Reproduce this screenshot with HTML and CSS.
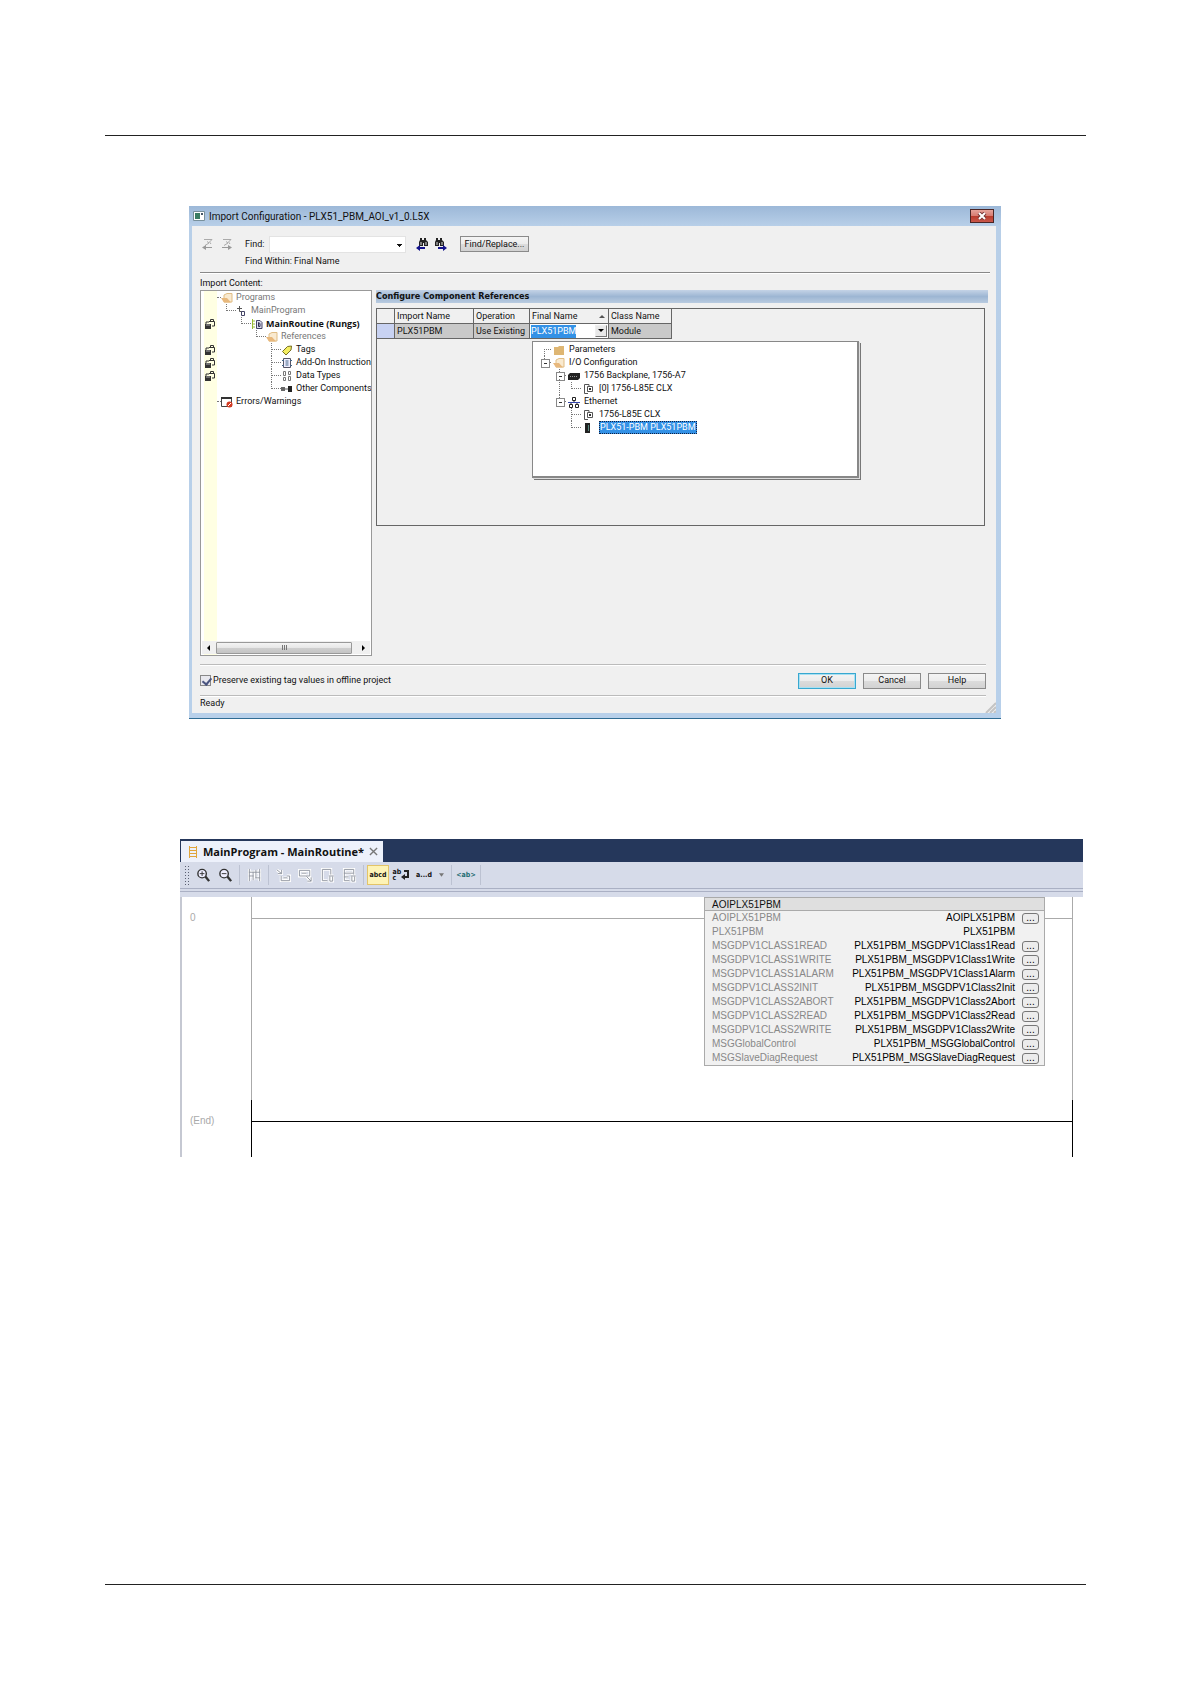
FILE: index.html
```html
<!DOCTYPE html>
<html lang="en">
<head>
    <meta charset="utf-8">
    <meta name="viewport" content="width=device-width, initial-scale=1">
    <title>Import Configuration</title>
    <link rel="stylesheet" href="styles.css">
</head>
<body>
    <svg class="sprite" aria-hidden="true">
        <symbol id="lock" viewBox="0 0 12 12">
            <path d="M1 6h6v5H1z" fill="#333"/>
            <path d="M2 6V4h3M5 3.500h5.500V8H8M6.500 3.500V1.500h3v2" fill="none" stroke="#333"/>
            <path d="M2 7h4" stroke="#aaa"/>
        </symbol>
        <symbol id="folder" viewBox="0 0 12 12">
            <path d="M1 3h4l1-1h5v9H1z" fill="#deb673"/>
        </symbol>
        <symbol id="folder-open" viewBox="0 0 12 12">
            <path d="M3 3l3-1.500h5v8.500H3z" fill="#f9ead0" stroke="#e0bd85"/>
            <path d="M0 6h6l4 4.500H3z" fill="#e8b87c"/>
        </symbol>
        <symbol id="program" viewBox="0 0 12 12">
            <path d="M3.500 1v5.500H6M1 3.500h5" fill="none" stroke="#555"/>
            <path d="M5.500 6.500h3v4h-3z" fill="#fff" stroke="#446"/>
        </symbol>
        <symbol id="routine" viewBox="0 0 12 12">
            <path d="M1.500 1v10M1 3h3M1 6h3M1 9h3" stroke="#9b3" fill="none"/>
            <path d="M5.500 2.500H9l2 2v6H5.500z" fill="#dde" stroke="#446"/>
            <path d="M7.500 4.500v4H9v-3z" fill="none" stroke="#335"/>
        </symbol>
        <symbol id="tag" viewBox="0 0 12 12">
            <path d="M1.500 7.500l5-5 4-.500-.500 4-5 5z" fill="#f4ee62" stroke="#776f22"/>
        </symbol>
        <symbol id="addon" viewBox="0 0 12 12">
            <path d="M2.500 1.500h7v9h-7z" fill="#eef" stroke="#556"/>
            <path d="M1 3.500h2M1 8.500h2M9 3.500h2M9 8.500h2M4.500 4h3M4.500 6h3M4.500 8h3" stroke="#468"/>
        </symbol>
        <symbol id="types" viewBox="0 0 12 12">
            <path d="M2.500 1.500h2v4h-2zM7.500 1.500h2v3h-2zM2.500 7.500h2v3h-2zM7.500 6.500h2v4h-2z" fill="#fff" stroke="#777"/>
        </symbol>
        <symbol id="other" viewBox="0 0 12 12">
            <path d="M0 4h4v4H0z" fill="#666"/>
            <path d="M4 6h4" stroke="#555"/>
            <path d="M7 3h4v6H7z" fill="#222"/>
        </symbol>
        <symbol id="errors" viewBox="0 0 12 12">
            <path d="M.500 1.500h10v9H.500z" fill="#fff" stroke="#444"/>
            <path d="M0 2h11" stroke="#333" stroke-width="2"/>
            <circle cx="8.500" cy="8.500" r="3" fill="#d23a22"/>
            <path d="M7 10l3-3" stroke="#fff"/>
        </symbol>
        <symbol id="chassis" viewBox="0 0 12 12">
            <path d="M0 5l2-2h10v5l-2 2H0z" fill="#222"/>
            <path d="M2 6.500h7" stroke="#999" stroke-dasharray="1 1"/>
        </symbol>
        <symbol id="cpu" viewBox="0 0 12 12">
            <path d="M5 10.500H1.500v-9H6V3" fill="none" stroke="#555"/>
            <path d="M4.500 3.500h5v5h-5z" fill="#fff" stroke="#555"/>
            <path d="M6 5h2v2H6z" fill="#333"/>
        </symbol>
        <symbol id="network" viewBox="0 0 12 12">
            <path d="M0 6.500h12" stroke="#3344aa"/>
            <path d="M6 4v2M3 7v2M9 7v2" stroke="#222"/>
            <path d="M4.500 1.500h3v3h-3zM1.500 8.500h3v3h-3zM7.500 8.500h3v3h-3z" fill="#fff" stroke="#222"/>
        </symbol>
        <symbol id="module" viewBox="0 0 12 12">
            <path d="M2 1h5v10H2z" fill="#222"/>
            <path d="M5.500 3v6" stroke="#5a8a80"/>
        </symbol>
        <symbol id="find-prev" viewBox="0 0 14 14">
            <path d="M4 1h2v2h2V1h2v2l2 2v4H8V6H7v3H3V5l1-2z" fill="#222"/>
            <path d="M5 5v3M10 5v3" stroke="#ddd"/>
            <path d="M0 11l4-3v2h5v2H4v2z" fill="#12128a"/>
        </symbol>
        <symbol id="find-next" viewBox="0 0 14 14">
            <path d="M3 1h2v2h2V1h2v2l2 2v4H7V6H6v3H2V5l1-2z" fill="#222"/>
            <path d="M4 5v3M9 5v3" stroke="#ddd"/>
            <path d="M14 11l-4-3v2H5v2h5v2z" fill="#12128a"/>
        </symbol>
        <symbol id="mark-prev" viewBox="0 0 12 12">
            <path d="M2 1.500h8L7.500 4 9 6M5 3.500L7 5 3 7.500" fill="none" stroke="#aaa"/>
            <path d="M0 9.500L4 7v2h6v1H4v2z" fill="#999"/>
        </symbol>
        <symbol id="mark-next" viewBox="0 0 12 12">
            <path d="M2 1.500h8L7.500 4 9 6M5 3.500L7 5 3 7.500" fill="none" stroke="#aaa"/>
            <path d="M11 9.500L7 7v2H1v1h6v2z" fill="#999"/>
        </symbol>
    </svg>

    <header class="page-header"></header>

    <section class="dialog">
        <div class="title-bar">
            <svg class="app-icon" viewBox="0 0 12 12"><path d="M.500 1.500h11v9H.500z" fill="#fff" stroke="#78909c"/><path d="M2 3h5v6H2z" fill="#3b7d62"/><path d="M8 3h2v2H8z" fill="#456"/></svg>
            <h1>Import Configuration - PLX51_PBM_AOI_v1_0.L5X</h1>
            <button class="close" aria-label="Close"><svg viewBox="0 0 10 8"><path d="M2 1l6 6M8 1L2 7" stroke="#733" stroke-width="4"/><path d="M2 1l6 6M8 1L2 7" stroke="#fff" stroke-width="2"/></svg></button>
        </div>
        <div class="dialog-body">
            <div class="find-bar">
                <svg class="icon"><use href="#mark-prev"/></svg>
                <svg class="icon next"><use href="#mark-next"/></svg>
                <label for="find">Find:</label>
                <select id="find"><option></option></select>
                <svg class="icon-big"><use href="#find-prev"/></svg>
                <svg class="icon-big"><use href="#find-next"/></svg>
                <button class="find-replace">Find/Replace...</button>
            </div>
            <p class="find-within">Find Within: Final Name</p>
            <hr class="dark">
            <div class="panes">
                <div class="content-pane">
                    <h2 class="content-title">Import Content:</h2>
                    <div class="content-tree">
                        <ul class="tree">
                            <li class="l0"><span class="lock"></span><i class="twig"></i><svg class="icon"><use href="#folder-open"/></svg><span class="dim">Programs</span></li>
                            <li class="l1"><span class="lock"></span><i class="twig"></i><svg class="icon"><use href="#program"/></svg><span class="dim">MainProgram</span></li>
                            <li class="l2"><svg class="lock"><use href="#lock"/></svg><i class="twig"></i><svg class="icon"><use href="#routine"/></svg><b>MainRoutine (Rungs)</b></li>
                            <li class="l3"><span class="lock"></span><i class="twig"></i><svg class="icon"><use href="#folder-open"/></svg><span class="dim">References</span></li>
                            <li class="l4"><svg class="lock"><use href="#lock"/></svg><i class="twig more"></i><svg class="icon"><use href="#tag"/></svg><span>Tags</span></li>
                            <li class="l4"><svg class="lock"><use href="#lock"/></svg><i class="twig more"></i><svg class="icon"><use href="#addon"/></svg><span>Add-On Instructions</span></li>
                            <li class="l4"><svg class="lock"><use href="#lock"/></svg><i class="twig more"></i><svg class="icon"><use href="#types"/></svg><span>Data Types</span></li>
                            <li class="l4"><span class="lock"></span><i class="twig"></i><svg class="icon"><use href="#other"/></svg><span>Other Components</span></li>
                            <li class="l0"><span class="lock"></span><i class="twig"></i><svg class="icon"><use href="#errors"/></svg><span>Errors/Warnings</span></li>
                        </ul>
                        <div class="scrollbar">
                            <svg viewBox="0 0 8 8"><path d="M5 1v6L2 4z"/></svg>
                            <div class="thumb"><i></i><i></i><i></i></div>
                            <svg viewBox="0 0 8 8"><path d="M3 1v6l3-3z"/></svg>
                        </div>
                    </div>
                </div>
                <div class="reference-pane">
                    <h2 class="pane-title">Configure Component References</h2>
                    <div class="reference-box">
                        <table>
                            <thead>
                                <tr>
                                    <th class="c-mark"></th>
                                    <th class="c-import">Import Name</th>
                                    <th class="c-operation">Operation</th>
                                    <th class="c-final"><div class="sorted">Final Name <svg viewBox="0 0 6 4"><path d="M0 4l3-3 3 3z" fill="#555"/></svg></div></th>
                                    <th class="c-class">Class Name</th>
                                </tr>
                            </thead>
                            <tbody>
                                <tr>
                                    <td class="mark"></td>
                                    <td>PLX51PBM</td>
                                    <td>Use Existing</td>
                                    <td class="editing">
                                        <div class="combo"><span>PLX51PBM</span><button aria-label="Open list"><svg viewBox="0 0 6 4"><path d="M0 0h6L3 3z"/></svg></button></div>
                                        <div class="popup">
                                            <ul class="tree modules">
                                                <li class="l0"><i class="twig first"></i><svg class="icon"><use href="#folder"/></svg><span>Parameters</span></li>
                                                <li class="l0"><i class="twig box"></i><svg class="icon"><use href="#folder-open"/></svg><span>I/O Configuration</span></li>
                                                <li class="l1"><i class="twig box"></i><svg class="icon"><use href="#chassis"/></svg><span>1756 Backplane, 1756-A7</span></li>
                                                <li class="l2 pass"><i class="twig"></i><svg class="icon"><use href="#cpu"/></svg><span>[0] 1756-L85E CLX</span></li>
                                                <li class="l1"><i class="twig box"></i><svg class="icon"><use href="#network"/></svg><span>Ethernet</span></li>
                                                <li class="l2"><i class="twig more"></i><svg class="icon"><use href="#cpu"/></svg><span>1756-L85E CLX</span></li>
                                                <li class="l2"><i class="twig"></i><svg class="icon"><use href="#module"/></svg><span class="selected">PLX51-PBM PLX51PBM</span></li>
                                            </ul>
                                        </div>
                                    </td>
                                    <td>Module</td>
                                </tr>
                            </tbody>
                        </table>
                    </div>
                </div>
            </div>
            <hr>
            <div class="actions">
                <input type="checkbox" id="preserve" checked>
                <label for="preserve">Preserve existing tag values in offline project</label>
                <button class="default">OK</button>
                <button>Cancel</button>
                <button>Help</button>
            </div>
            <hr>
            <div class="status">
                <span>Ready</span>
                <svg class="grip" viewBox="0 0 12 12"><path d="M2 12L12 2M6 12l6-6M10 12l2-2" stroke="#c4c4c4" stroke-width="2"/></svg>
            </div>
        </div>
    </section>

    <section class="editor">
        <div class="tabs">
            <div class="tab">
                <svg class="ladder-icon" viewBox="0 0 10 14"><path d="M1.500 1v12M8.500 1v12M1 2.500h8M1 5.500h8M1 8.500h8M1 11.500h8" fill="none" stroke="#e0a53c"/></svg>
                <h2>MainProgram - MainRoutine*</h2>
                <button aria-label="Close tab"><svg viewBox="0 0 10 10"><path d="M1 1l8 8M9 1L1 9" stroke="#777" stroke-width="1.500"/></svg></button>
            </div>
        </div>
        <div class="toolbar">
            <i class="handle"></i>
            <button aria-label="Zoom in"><svg viewBox="0 0 16 16"><circle cx="6.500" cy="6" r="4.500" fill="#eef" stroke="#333" stroke-width="1.500"/><path d="M4 6h5M6.500 3.500v5" stroke="#333"/><path d="M10 9l4 5" stroke="#333" stroke-width="2.500"/></svg></button>
            <button aria-label="Zoom out"><svg viewBox="0 0 16 16"><circle cx="6.500" cy="6" r="4.500" fill="#eef" stroke="#333" stroke-width="1.500"/><path d="M4 6h5" stroke="#333"/><path d="M10 9l4 5" stroke="#333" stroke-width="2.500"/></svg></button>
            <i class="sep"></i>
            <button aria-label="Toggle view"><svg viewBox="0 0 16 16"><path d="M2.500 1v13M13.500 1v13M2 4.500h12M2 8.500h5M9 10.500h5M6.500 4v9M9.500 2v9" fill="none" stroke="#fff" stroke-width="3"/><path d="M2.500 1v13M13.500 1v13M2 4.500h12M2 8.500h5M9 10.500h5M6.500 4v9M9.500 2v9" fill="none" stroke="#8f949f"/></svg></button>
            <i class="sep"></i>
            <button aria-label="Start edit"><svg viewBox="0 0 16 16"><path d="M5.500 8.500v5h9v-5h-3M8 10.500h4M1 2l5 4M2 6h4V2" fill="none" stroke="#fff" stroke-width="3"/><path d="M5.500 8.500v5h9v-5h-3M8 10.500h4M1 2l5 4M2 6h4V2" fill="none" stroke="#8f949f"/></svg></button>
            <button aria-label="Accept edit"><svg viewBox="0 0 16 16"><path d="M1.500 2.500h11v6h-11zM4 5.500h5M9 9l5 5M10 14h4v-4" fill="none" stroke="#fff" stroke-width="3"/><path d="M1.500 2.500h11v6h-11zM4 5.500h5M9 9l5 5M10 14h4v-4" fill="none" stroke="#8f949f"/></svg></button>
            <button aria-label="Cancel edit"><svg viewBox="0 0 16 16"><path d="M8 13.500H2.500v-12h9V7M9.500 8.500h5M10.500 9v5h3V9" fill="none" stroke="#fff" stroke-width="3"/><path d="M8 13.500H2.500v-12h9V7M9.500 8.500h5M10.500 9v5h3V9" fill="none" stroke="#8f949f"/></svg></button>
            <button aria-label="Delete edit"><svg viewBox="0 0 16 16"><path d="M8 13.500H2.500v-12h10V7M2 5.500h10M2 9.500h5M9.500 8.500h5M10.500 9v5h3V9" fill="none" stroke="#fff" stroke-width="3"/><path d="M8 13.500H2.500v-12h10V7M2 5.500h10M2 9.500h5M9.500 8.500h5M10.500 9v5h3V9" fill="none" stroke="#8f949f"/></svg></button>
            <i class="sep"></i>
            <button class="text on">abcd</button>
            <button class="wrap" aria-label="Wrap names"><span>ab<br>c</span><svg viewBox="0 0 8 10"><path d="M3 1h4v6H2" fill="none" stroke="#222" stroke-width="2"/><path d="M0 7l4-3v6z" fill="#222"/></svg></button>
            <button class="text">a...d</button>
            <svg class="drop" viewBox="0 0 6 4"><path d="M0 0h6L3 4z" fill="#777"/></svg>
            <i class="sep"></i>
            <button class="text teal">&lt;ab&gt;</button>
            <i class="sep"></i>
        </div>
        <div class="strip"></div>
        <div class="ladder">
            <div class="rung">
                <span class="number">0</span>
                <div class="rails">
                    <i class="wire"></i>
                    <table class="block">
                        <caption>AOIPLX51PBM</caption>
                        <tbody>
                            <tr><th>AOIPLX51PBM</th><td>AOIPLX51PBM</td><td class="more"><button>...</button></td></tr>
                            <tr><th>PLX51PBM</th><td>PLX51PBM</td><td></td></tr>
                            <tr><th>MSGDPV1CLASS1READ</th><td>PLX51PBM_MSGDPV1Class1Read</td><td class="more"><button>...</button></td></tr>
                            <tr><th>MSGDPV1CLASS1WRITE</th><td>PLX51PBM_MSGDPV1Class1Write</td><td class="more"><button>...</button></td></tr>
                            <tr><th>MSGDPV1CLASS1ALARM</th><td>PLX51PBM_MSGDPV1Class1Alarm</td><td class="more"><button>...</button></td></tr>
                            <tr><th>MSGDPV1CLASS2INIT</th><td>PLX51PBM_MSGDPV1Class2Init</td><td class="more"><button>...</button></td></tr>
                            <tr><th>MSGDPV1CLASS2ABORT</th><td>PLX51PBM_MSGDPV1Class2Abort</td><td class="more"><button>...</button></td></tr>
                            <tr><th>MSGDPV1CLASS2READ</th><td>PLX51PBM_MSGDPV1Class2Read</td><td class="more"><button>...</button></td></tr>
                            <tr><th>MSGDPV1CLASS2WRITE</th><td>PLX51PBM_MSGDPV1Class2Write</td><td class="more"><button>...</button></td></tr>
                            <tr><th>MSGGlobalControl</th><td>PLX51PBM_MSGGlobalControl</td><td class="more"><button>...</button></td></tr>
                            <tr><th>MSGSlaveDiagRequest</th><td>PLX51PBM_MSGSlaveDiagRequest</td><td class="more"><button>...</button></td></tr>
                        </tbody>
                    </table>
                    <i class="wire short"></i>
                </div>
            </div>
            <div class="rung end">
                <span class="number">(End)</span>
                <div class="rails"><i class="wire"></i></div>
            </div>
        </div>
    </section>

    <footer class="page-footer"></footer>
</body>
</html>
```

FILE: styles.css
```css
* {
    box-sizing: border-box;
}
body {
    display: flex;
    flex-direction: column;
    min-height: 100vh;
    margin: 0;
    padding: 0 105px;
    background: white;
    color: #111;
    font: 9px/13px Roboto, "Liberation Sans", sans-serif;
}
h1, h2, p, ul, hr {
    margin: 0;
    padding: 0;
}
button, select, input {
    margin: 0;
    padding: 0;
    font: inherit;
    color: inherit;
}
svg {
    flex: none;
}
.sprite {
    position: absolute;
    width: 0;
    height: 0;
}
.page-header {
    height: 136px;
    border-bottom: 1px solid #222;
}
.page-footer {
    height: 100px;
    margin-top: auto;
    border-top: 1px solid #222;
}
.icon {
    width: 12px;
    height: 12px;
}
.icon-big {
    width: 14px;
    height: 14px;
}

/* import dialog */
.dialog {
    margin: 70px 85px 0 84px;
    padding: 0 5px 5px 3px;
    background: linear-gradient(#9cb8d8, #b8cfe8 20px, #b8d0ea);
    border-bottom: 1px solid #2f6c94;
}
.title-bar {
    display: flex;
    align-items: center;
    height: 20px;
}
.title-bar h1 {
    flex: 1;
    padding-top: 1px;
    font-size: 10px;
    font-weight: normal;
}
.app-icon {
    width: 12px;
    height: 12px;
    margin: 0 4px 0 1px;
}
.close {
    display: flex;
    align-items: center;
    justify-content: center;
    width: 24px;
    height: 14px;
    margin-right: 2px;
    border: 1px solid #4a2525;
    background: linear-gradient(#e6a39b, #d77a70 50%, #b93a2c 50%, #c9574a);
}
.close svg {
    width: 10px;
    height: 8px;
}
.dialog-body {
    padding: 0 10px 0 8px;
    background: #f0f0f0;
}
hr {
    border: 0;
    border-top: 1px solid #bbb;
    border-bottom: 1px solid white;
}
hr.dark {
    margin-right: -4px;
    border-top-color: #888;
}
.find-bar {
    display: flex;
    align-items: center;
    height: 28px;
    padding: 8px 0 0 2px;
}
.find-bar .next {
    margin-left: 7px;
}
.find-bar label {
    width: 24px;
    margin-left: 12px;
}
.find-bar select {
    width: 137px;
    height: 17px;
    margin-right: 10px;
    border: 1px solid #e3e3e3;
    appearance: none;
    background: linear-gradient(#111, #111) no-repeat right 3px top 7px / 5px 1px, linear-gradient(#111, #111) no-repeat right 4px top 8px / 3px 1px, linear-gradient(#111, #111) no-repeat right 5px top 9px / 1px 1px, white;
}
.find-bar .icon-big + .icon-big {
    margin-left: 3px;
}
.find-replace {
    width: 69px;
    height: 16px;
    margin-left: 13px;
}
.find-replace, .actions button {
    border: 1px solid #8a8a8a;
    background: linear-gradient(#f4f4f4, #ececec 50%, #dcdcdc 50%, #d2d2d2);
}
.find-within {
    height: 18px;
    padding: 1px 0 0 45px;
}
.panes {
    display: flex;
    gap: 4px;
    padding: 2px 0 8px;
}
.content-pane {
    width: 172px;
}
.content-title {
    height: 14px;
    font-size: 9px;
    font-weight: normal;
    line-height: 14px;
}
.content-tree {
    display: flex;
    flex-direction: column;
    height: 366px;
    border: 1px solid #999;
    overflow: hidden;
    background: linear-gradient(90deg, white 3px, #ffffe3 3px, #ffffe3 16px, white 16px);
}

/* trees */
.tree {
    flex: 1;
    padding-left: 3px;
    list-style: none;
}
.tree li {
    position: relative;
    display: flex;
    align-items: center;
    height: 13px;
    white-space: nowrap;
}
.tree .icon {
    margin-right: 3px;
}
.lock {
    flex: none;
    width: 12px;
    height: 12px;
    margin-right: 1px;
}
.dim {
    color: #777;
}
.tree b {
    font-family: "Open Sans", sans-serif;
}
.twig {
    position: relative;
    flex: none;
    align-self: stretch;
    width: 10px;
}
.twig::before {
    content: "";
    position: absolute;
    inset: 0 0 6px 0;
    border-left: 1px dotted #777;
    border-bottom: 1px dotted #777;
}
.twig.more::after {
    content: "";
    position: absolute;
    inset: 0 auto 0 0;
    border-left: 1px dotted #777;
}
.content-tree .l0 .twig {
    width: 4px;
}
.content-tree .l0 .twig::before {
    border-left: 0;
}
.content-tree .l1 .twig {
    margin-left: 9px;
}
.content-tree .l2 .twig {
    margin-left: 24px;
}
.content-tree .l3 .twig {
    margin-left: 39px;
}
.content-tree .l4 .twig {
    margin-left: 54px;
}
.scrollbar {
    display: flex;
    align-items: center;
    height: 13px;
    margin: 0 1px 1px;
    background: #f0f0f0;
}
.scrollbar svg {
    width: 8px;
    height: 8px;
    margin: 0 3px;
}
.thumb {
    display: flex;
    justify-content: center;
    align-items: center;
    gap: 1px;
    flex: 1;
    height: 12px;
    margin-right: 4px;
    border: 1px solid #999;
    border-radius: 1px;
    background: linear-gradient(#f4f4f4, #e6e6e6 50%, #cfcfcf 50%, #c4c4c4);
}
.thumb i {
    width: 1px;
    height: 5px;
    background: #777;
}

/* component references */
.reference-pane {
    display: flex;
    flex-direction: column;
    flex: 1;
    padding: 14px 0 0;
}
.pane-title {
    height: 13px;
    margin-right: -2px;
    background: linear-gradient(#c4d3e6, #9db6d3 50%, #b9cbe0);
    font: bold 9px/13px "DejaVu Sans Condensed", "DejaVu Sans", sans-serif;
}
.reference-box {
    height: 218px;
    margin: 5px 1px 0 0;
    border: 1px solid #666;
}
.reference-box table {
    border-collapse: collapse;
    table-layout: fixed;
    width: 296px;
    margin: -1px;
}
.reference-box th, .reference-box td {
    height: 15px;
    padding: 0 0 0 2px;
    border: 1px solid #666;
    background: #c9c9c9;
    font-weight: normal;
    line-height: 13px;
    text-align: left;
    white-space: nowrap;
}
.reference-box th {
    background: #f0f0f0;
}
.reference-box .c-mark {
    width: 18px;
}
.c-import {
    width: 79px;
}
.c-operation {
    width: 56px;
}
.c-final {
    width: 79px;
}
.sorted {
    display: flex;
    align-items: center;
    justify-content: space-between;
    padding-right: 3px;
}
.sorted svg {
    width: 6px;
    height: 4px;
}
.reference-box .mark {
    background: #c8d2f2;
}
.reference-box .editing {
    position: relative;
    padding: 0 1px;
    background: white;
}
.combo {
    display: flex;
    align-items: center;
    justify-content: space-between;
}
.combo span {
    background: #3391e6;
    color: white;
}
.combo button {
    display: flex;
    align-items: center;
    justify-content: center;
    width: 12px;
    height: 12px;
    border: 1px solid;
    border-color: #eee #777 #777 #eee;
    background: #e8e8e8;
}
.combo svg {
    width: 6px;
    height: 4px;
}
.popup {
    position: absolute;
    z-index: 1;
    top: 17px;
    left: 2px;
    width: 327px;
    height: 137px;
    padding: 1px 0 0 5px;
    border: 1px solid #888;
    border-width: 1px 2px 2px 1px;
    background: white;
    box-shadow: 1px 1px #ddd, 2px 2px #777;
}
.modules .icon {
    margin-right: 4px;
}
.modules .twig {
    margin-right: 2px;
}
.modules .l1 .twig {
    margin-left: 15px;
}
.modules .l2 .twig {
    margin-left: 30px;
}
.modules .first::before {
    inset: 6px 0 0 3px;
    border-top: 1px dotted #777;
    border-bottom: 0;
}
.modules .box::before {
    left: 3px;
}
.modules .box::after {
    content: "";
    position: absolute;
    inset: 3px auto auto 0;
    width: 7px;
    height: 7px;
    border: 1px solid #888;
    background: linear-gradient(#333, #333) no-repeat center / 3px 1px, white;
}
.modules .pass::before {
    content: "";
    position: absolute;
    inset: -3px auto 0 18px;
    border-left: 1px dotted #777;
}
.selected {
    padding: 0 1px;
    outline: 1px dotted #124;
    outline-offset: -1px;
    background: #3391e6;
    color: white;
}

/* dialog footer */
.actions {
    display: flex;
    align-items: center;
    gap: 7px;
    height: 29px;
}
.actions input {
    appearance: none;
    width: 11px;
    height: 11px;
    margin-right: -5px;
    border: 1px solid #888;
    background: #e8e8ee;
}
.actions input:checked::before {
    content: "";
    display: block;
    width: 4px;
    height: 7px;
    margin-left: 3px;
    border: solid #4a5580;
    border-width: 0 2px 2px 0;
    transform: rotate(40deg);
}
.actions label {
    flex: 1;
}
.actions button {
    width: 58px;
    height: 16px;
}
.actions .default {
    border-color: #38a8d0;
    box-shadow: inset 0 0 0 1px #a9e0f2;
}
.status {
    display: flex;
    justify-content: space-between;
    height: 16px;
    margin-right: -10px;
}
.grip {
    align-self: flex-end;
    width: 12px;
    height: 12px;
}

/* ladder editor */
.editor {
    margin: 120px 3px 0 75px;
    font: 10px/14px "Liberation Sans", sans-serif;
}
.tabs {
    height: 23px;
    padding: 2px 0 0 1px;
    background: #25375b;
}
.tab {
    display: flex;
    align-items: center;
    width: 202px;
    height: 21px;
    padding: 0 5px 0 7px;
    background: #edf1fb;
}
.tab h2 {
    flex: 1;
    margin-left: 5px;
    font: bold 11px/20px "Open Sans", sans-serif;
}
.ladder-icon {
    width: 10px;
    height: 14px;
}
.tab button {
    display: flex;
    border: 0;
    background: none;
}
.tab button svg {
    width: 9px;
    height: 9px;
}
.toolbar {
    display: flex;
    align-items: center;
    height: 26px;
    padding-left: 4px;
    background: #d6dbe9;
}
.toolbar button {
    display: flex;
    align-items: center;
    justify-content: center;
    width: 22px;
    height: 20px;
    border: 0;
    background: none;
}
.toolbar button > svg {
    width: 15px;
    height: 15px;
}
.toolbar .text {
    font: bold 7px/10px "DejaVu Sans Condensed", "DejaVu Sans", sans-serif;
}
.toolbar .on {
    border: 1px solid #e3c468;
    background: #fdf3b6;
}
.toolbar .teal {
    color: #1d6b72;
}
.toolbar .wrap {
    width: 24px;
    font: bold 7px/6px "DejaVu Sans Condensed", "DejaVu Sans", sans-serif;
    text-align: left;
}
.toolbar .wrap svg {
    width: 8px;
    height: 10px;
}
.handle {
    width: 6px;
    height: 20px;
    margin-right: 2px;
    background: radial-gradient(#5a6072 30%, transparent 40%) 0 0 / 3px 3px;
}
.sep {
    width: 1px;
    height: 20px;
    margin: 0 3px;
    background: #bcc2d2;
}
.drop {
    width: 5px;
    height: 4px;
    margin: 0 4px;
}
.strip {
    height: 9px;
    border-top: 1px solid #aab0c4;
    border-bottom: 3px solid #d6dbe9;
    background: linear-gradient(#d6dbe9 2px, #aab0c4 2px, #aab0c4 3px, #d6dbe9 3px);
}
.ladder {
    border-left: 2px solid #c5c8d2;
}
.rung {
    display: flex;
    min-height: 203px;
    padding-right: 10px;
}
.number {
    width: 69px;
    padding: 14px 0 0 8px;
    color: #aaa;
}
.rails {
    display: flex;
    align-items: flex-start;
    flex: 1;
    border: solid #aaa;
    border-width: 0 1px;
}
.wire {
    flex: 1;
    height: 1px;
    margin-top: 21px;
    background: #aaa;
}
.wire.short {
    flex: none;
    width: 27px;
}
.block {
    width: 341px;
    border: 1px solid #aaa;
    border-top: 0;
    border-collapse: separate;
    border-spacing: 0;
    background: #f1f1f1;
}
.block caption {
    height: 14px;
    padding-left: 7px;
    border: 1px solid #aaa;
    background: #dfdfdf;
    text-align: left;
    line-height: 13px;
}
.block th, .block td {
    height: 14px;
    padding: 0;
    line-height: 14px;
    white-space: nowrap;
}
.block th {
    padding-left: 7px;
    color: #888;
    font-weight: normal;
    text-align: left;
}
.block td {
    color: #000;
    text-align: right;
}
.block .more {
    width: 29px;
    padding-right: 5px;
}
.block button {
    display: block;
    width: 17px;
    height: 11px;
    margin-left: auto;
    border: 1px solid #777;
    border-radius: 3px;
    background: #ececec;
    line-height: 8px;
}
.rung.end {
    min-height: 57px;
}
.end .rails {
    border-color: #000;
}
.end .wire {
    background: #000;
}
```
